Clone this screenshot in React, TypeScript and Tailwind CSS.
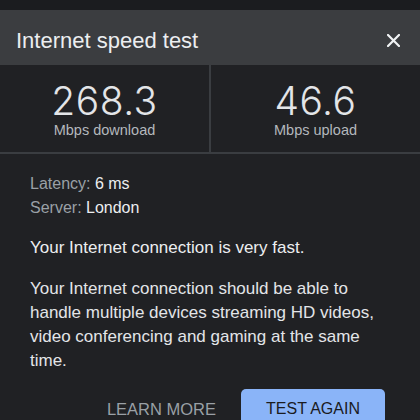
import React from 'react';

const font = { fontFamily: '"Liberation Sans", Arial, sans-serif' };

const Stat: React.FC<{ value: string; label: string }> = ({ value, label }) => (
  <div className="flex flex-1 flex-col items-center pt-[15px] pb-[14px]">
    <div className="font-['Inter',_sans-serif] text-[39px] leading-[42px] font-light tracking-[0.5px] text-[#e3e5e8]">
      {value}
    </div>
    <div className="text-[14.5px] leading-[16px] text-[#b4b8bd]">{label}</div>
  </div>
);

export default function App() {
  return (
    <div className="h-[420px] w-[420px] overflow-hidden bg-[#202124]" style={font}>
      <div className="h-[10px] bg-[#1b1c1f]" />
      <div className="flex h-[55px] items-start justify-between bg-[#3b3d40] pl-4 pr-[20px]">
        <h1 className="pt-[17px] text-[22px] leading-[28px] text-[#eceef0]">Internet speed test</h1>
        <svg className="mt-[24px]" width="13" height="13" viewBox="0 0 13 13" fill="none">
          <path d="M1 1L12 12M12 1L1 12" stroke="#f1f3f4" strokeWidth="2.2" strokeLinecap="square" />
        </svg>
      </div>
      <div className="flex border-b-2 border-[#3a3d41]">
        <Stat value="268.3" label="Mbps download" />
        <div className="w-[2px] bg-[#3a3d41]" />
        <Stat value="46.6" label="Mbps upload" />
      </div>
      <div className="px-[30px] pt-[17.5px]">
        <div className="text-[16px] leading-[24px]">
          <p>
            <span className="text-[#9aa0a6]">Latency: </span>
            <span className="text-[#eceef0]">6 ms</span>
          </p>
          <p>
            <span className="text-[#9aa0a6]">Server: </span>
            <span className="text-[#eceef0]">London</span>
          </p>
        </div>
        <p className="mt-[16.5px] text-[17px] leading-[24px] font-medium text-[#eceef0]">
          Your Internet connection is very fast.
        </p>
        <p className="mt-[17px] text-[17px] leading-[24px] text-[#e3e5e8]">
          Your Internet connection should be able to handle multiple devices streaming HD videos, video
          conferencing and gaming at the same time.
        </p>
      </div>
      <div className="mt-[16px] flex items-start justify-end gap-[25px] pr-[35px]">
        <button className="h-[40px] text-[16.5px] leading-[16px] font-medium text-[#9aa0a6]">LEARN MORE</button>
        <button className="h-[40px] w-[144px] rounded-[5px] bg-[#8ab4f8] text-[16px] leading-[16px] font-medium text-[#1a1b1e]">
          TEST AGAIN
        </button>
      </div>
    </div>
  );
}
